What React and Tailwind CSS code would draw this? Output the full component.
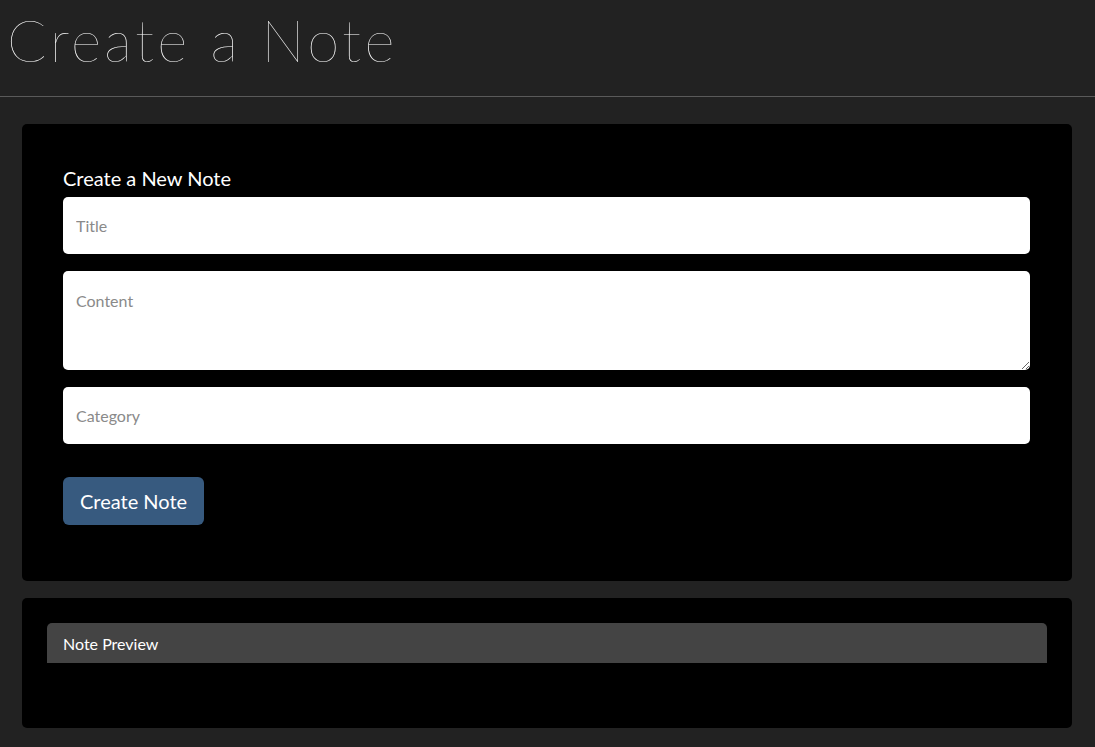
import { useState } from "react";

export default function App() {
  const [title, setTitle] = useState("");
  const [content, setContent] = useState("");
  const [category, setCategory] = useState("");

  return (
    <div className="min-h-[747px] bg-[#222222] font-['Lato','Open_Sans',sans-serif] text-white">
      {/* header */}
      <div className="h-[97px] border-b border-[#5a5a5a] px-[7px]">
        <h1 className="text-[58px] font-thin leading-[80px] tracking-[3.4px] font-['Lato',sans-serif]">
          Create a Note
        </h1>
      </div>

      <div className="flex flex-col gap-[17px] pl-[22px] pr-[23px] pt-[27px]">
        {/* form card */}
        <div className="rounded-[5px] bg-black pl-[41px] pr-[42px] pt-[42px] pb-[56px]">
          <div className="mb-[7px] text-[20px] leading-[24px]">Create a New Note</div>
          <div className="flex flex-col gap-[17px]">
            <input
              className="h-[57px] w-full rounded-[5px] bg-white px-[13px] text-[16px] text-[#222] placeholder:text-[#8a8a8a] outline-none"
              placeholder="Title"
              value={title}
              onChange={(e) => setTitle(e.target.value)}
            />
            <textarea
              className="block h-[99px] w-full rounded-[5px] bg-white px-[13px] pt-[18px] text-[16px] text-[#222] placeholder:text-[#8a8a8a] outline-none"
              placeholder="Content"
              value={content}
              onChange={(e) => setContent(e.target.value)}
            />
            <input
              className="h-[57px] w-full rounded-[5px] bg-white px-[13px] text-[16px] text-[#222] placeholder:text-[#8a8a8a] outline-none"
              placeholder="Category"
              value={category}
              onChange={(e) => setCategory(e.target.value)}
            />
          </div>
          <button className="mt-[33px] h-[48px] rounded-[6px] bg-[#375a7f] px-[17px] text-[20px] text-white">
            Create Note
          </button>
        </div>

        {/* preview card */}
        <div className="h-[130px] rounded-[5px] bg-black px-[25px] pt-[25px]">
          <div className="h-[40px] rounded-t-[5px] bg-[#444444] px-[16px] text-[16px] leading-[42px]">
            Note Preview
          </div>
        </div>
      </div>
    </div>
  );
}
